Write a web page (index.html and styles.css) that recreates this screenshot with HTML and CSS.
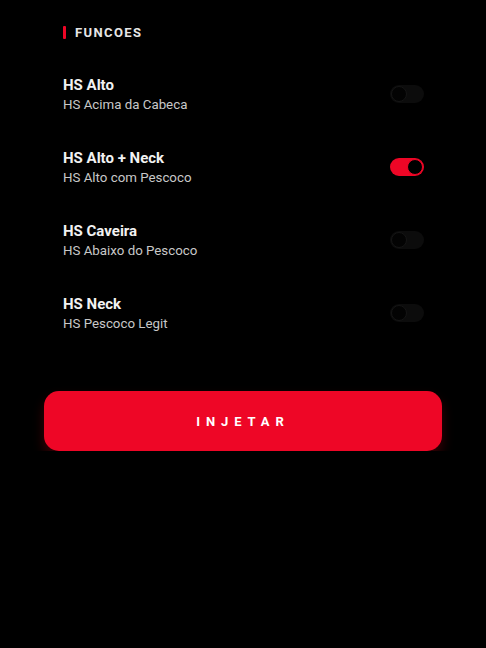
FILE: index.html
```html
<!DOCTYPE html>
<html lang="pt-BR">
<head>
    <meta charset="UTF-8">
    <meta name="viewport" content="width=device-width, initial-scale=1.0">
    <title>Funcoes</title>
    <link rel="stylesheet" href="styles.css">
</head>
<body>
    <main class="painel">
        <section class="secao">
            <h2 class="secao-titulo">FUNCOES</h2>
            <ul class="lista">
                <li class="item">
                    <div class="item-texto">
                        <span class="item-nome">HS Alto</span>
                        <span class="item-desc">HS Acima da Cabeca</span>
                    </div>
                    <span class="toggle"></span>
                </li>
                <li class="item">
                    <div class="item-texto">
                        <span class="item-nome">HS Alto + Neck</span>
                        <span class="item-desc">HS Alto com Pescoco</span>
                    </div>
                    <span class="toggle ativo"></span>
                </li>
                <li class="item">
                    <div class="item-texto">
                        <span class="item-nome">HS Caveira</span>
                        <span class="item-desc">HS Abaixo do Pescoco</span>
                    </div>
                    <span class="toggle"></span>
                </li>
                <li class="item">
                    <div class="item-texto">
                        <span class="item-nome">HS Neck</span>
                        <span class="item-desc">HS Pescoco Legit</span>
                    </div>
                    <span class="toggle"></span>
                </li>
            </ul>
        </section>
        <button class="botao" type="button">INJETAR</button>
    </main>
</body>
</html>
```

FILE: styles.css
```css
:root {
    --fundo: #000;
    --vermelho: #ee0626;
    --texto: #f2f2f2;
    --texto-sec: #c8c8c8;
}
body {
    margin: 0;
    background-color: var(--fundo);
    font-family: Roboto, "Liberation Sans", sans-serif;
    color: var(--texto);
}
.painel {
    display: flex;
    flex-direction: column;
    padding-top: 24px;
}
.secao {
    padding: 0 62px 0 63px;
}
.secao-titulo {
    display: flex;
    align-items: center;
    gap: 9px;
    margin: 0;
    height: 17px;
    font-size: 13px;
    font-weight: 700;
    letter-spacing: 1.4px;
    color: #e6e6e6;
}
.secao-titulo::before {
    content: "";
    width: 3px;
    height: 13px;
    border-radius: 1px;
    background-color: var(--vermelho);
}
.lista {
    list-style: none;
    margin: 16px 0 0;
    padding: 0;
}
.item {
    display: flex;
    align-items: center;
    justify-content: space-between;
    height: 73px;
}
.item-texto {
    display: flex;
    flex-direction: column;
    gap: 3px;
    padding-top: 2px;
}
.item-nome {
    font-size: 15px;
    font-weight: 700;
    line-height: 18px;
}
.item-desc {
    font-size: 13.3px;
    line-height: 16px;
    color: var(--texto-sec);
}
.toggle {
    position: relative;
    width: 34px;
    height: 18px;
    border-radius: 9px;
    background-color: #0c0c0c;
}
.toggle::after {
    content: "";
    position: absolute;
    top: 1px;
    left: 1px;
    width: 14px;
    height: 14px;
    border-radius: 50%;
    border: 1px solid #151515;
    background-color: #030303;
}
.toggle.ativo {
    background-color: var(--vermelho);
}
.toggle.ativo::after {
    left: auto;
    right: 1px;
    border-color: var(--vermelho);
    background-color: #000;
}
.botao {
    margin: 42px 44px 0;
    height: 60px;
    border: none;
    border-radius: 15px;
    background-color: var(--vermelho);
    color: #fff;
    font-family: Roboto, "Liberation Sans", sans-serif;
    font-size: 13px;
    font-weight: 700;
    letter-spacing: 5.9px;
    padding-left: 6px;
    box-shadow: 0 7px 12px rgba(170, 0, 15, 0.35);
    cursor: pointer;
}
```
